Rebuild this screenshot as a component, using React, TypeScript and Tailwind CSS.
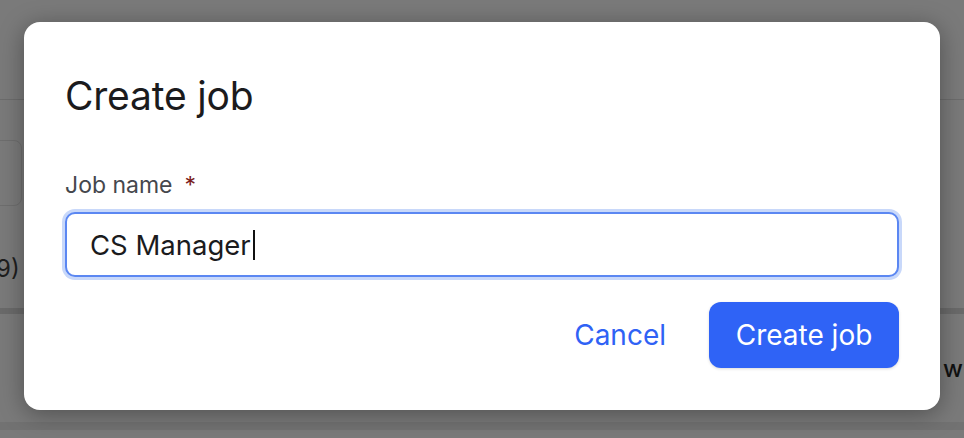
import { useState } from 'react';

export default function App() {
  const [name, setName] = useState('CS Manager');

  return (
    <div className="relative h-[438px] w-[964px] overflow-hidden bg-[#7a7a7a] font-['Inter',sans-serif]">
      {/* page behind the overlay */}
      <div className="flex flex-col pt-[99px]">
        <div className="h-px bg-[#6c6c6c]" />
        <div className="mt-[40px] h-[66px] w-[60px] -ml-[38px] rounded-lg border border-[#6e6e6e]" />
        <div className="mt-[48px] flex text-[24px] leading-[30px] text-[#1e1e1e]">
          <span className="-ml-[4px]">9)</span>
        </div>
        <div className="mt-[24px] h-[6px] bg-[#6a6a6a]" />
        <div className="mt-[40px] flex justify-end pr-[1px] text-[24px] leading-[30px] text-[#111]">
          <span className="font-medium">w</span>
        </div>
        <div className="mt-[38px] h-[8px] bg-[#727272]" />
      </div>

      {/* dialog */}
      <div className="absolute left-[24px] top-[22px] flex h-[388px] w-[916px] flex-col rounded-2xl bg-white px-[41px] pt-[51px] shadow-[0_4px_24px_rgba(0,0,0,0.35)]">
        <h1 className="text-[39px] leading-[46px] font-normal tracking-[-0.2px] text-[#1b1b1d]">Create job</h1>

        <label className="mt-[52px] flex items-center gap-[12px] text-[23px] leading-[28px] text-[#45474d]">
          Job name <span className="text-[#7b1d1d]">*</span>
        </label>

        <div className="relative mt-[13px]">
          <input
            value={name}
            onChange={e => setName(e.target.value)}
            className="h-[65px] w-full rounded-[10px] border-2 border-[#5b87f2] bg-white pl-[23px] text-[27.5px] text-[#1b1b1d] caret-transparent shadow-[0_0_0_3px_#c8d8fa] outline-none"
          />
          {/* caret */}
          <div className="pointer-events-none absolute inset-0 flex items-center pl-[25px] text-[27.5px]">
            <span className="invisible whitespace-pre">{name}</span>
            <span className="ml-[2px] h-[30px] w-[2px] bg-[#111]" />
          </div>
        </div>

        <div className="mt-[25px] flex justify-end gap-[16px]">
          <button className="h-[66px] rounded-xl px-[27px] text-[28px] text-[#2f62f5]">Cancel</button>
          <button className="h-[66px] w-[190px] rounded-xl bg-[#2f63f6] text-[28px] text-white shadow-[0_1px_3px_rgba(0,0,0,0.15)]">
            Create job
          </button>
        </div>
      </div>
    </div>
  );
}
